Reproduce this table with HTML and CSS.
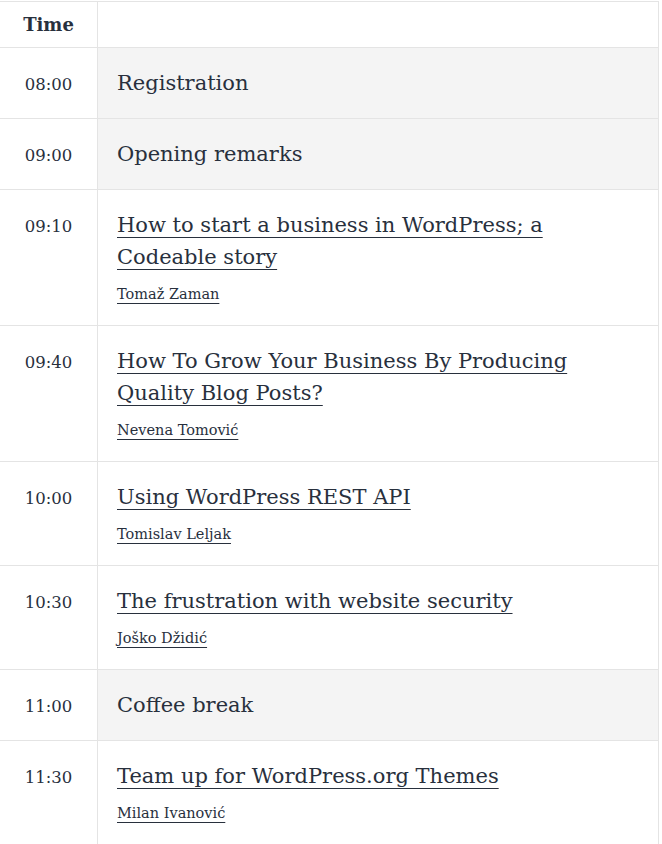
FILE: index.html
```html
<!DOCTYPE html>
<html lang="en">
<head>
    <meta charset="UTF-8">
    <meta name="viewport" content="width=device-width, initial-scale=1.0">
    <title>Schedule</title>
    <link rel="stylesheet" href="styles.css">
</head>
<body>
    <table class="schedule">
        <thead>
            <tr>
                <th class="time">Time</th>
                <th class="session"></th>
            </tr>
        </thead>
        <tbody>
            <tr class="break">
                <td class="time">08:00</td>
                <td class="session"><span class="title">Registration</span></td>
            </tr>
            <tr class="break">
                <td class="time">09:00</td>
                <td class="session"><span class="title">Opening remarks</span></td>
            </tr>
            <tr>
                <td class="time">09:10</td>
                <td class="session">
                    <a href="#" class="title">How to start a business in WordPress; a Codeable story</a>
                    <div class="speaker"><a href="#">Tomaž Zaman</a></div>
                </td>
            </tr>
            <tr>
                <td class="time">09:40</td>
                <td class="session">
                    <a href="#" class="title">How To Grow Your Business By Producing Quality Blog Posts?</a>
                    <div class="speaker"><a href="#">Nevena Tomović</a></div>
                </td>
            </tr>
            <tr>
                <td class="time">10:00</td>
                <td class="session">
                    <a href="#" class="title">Using WordPress REST API</a>
                    <div class="speaker"><a href="#">Tomislav Leljak</a></div>
                </td>
            </tr>
            <tr>
                <td class="time">10:30</td>
                <td class="session">
                    <a href="#" class="title">The frustration with website security</a>
                    <div class="speaker"><a href="#">Joško Džidić</a></div>
                </td>
            </tr>
            <tr class="break">
                <td class="time">11:00</td>
                <td class="session"><span class="title">Coffee break</span></td>
            </tr>
            <tr>
                <td class="time">11:30</td>
                <td class="session">
                    <a href="#" class="title">Team up for WordPress.org Themes</a>
                    <div class="speaker"><a href="#">Milan Ivanović</a></div>
                </td>
            </tr>
        </tbody>
    </table>
</body>
</html>
```

FILE: styles.css
```css
* {
    margin: 0;
    padding: 0;
    box-sizing: border-box;
}

body {
    font-family: 'DejaVu Serif', 'Liberation Serif', serif;
    background: #fff;
    color: #28303d;
}

a {
    color: #28303d;
    text-decoration: underline;
    text-decoration-thickness: 1px;
    text-underline-offset: 0.25em;
}

.schedule {
    width: 659px;
    margin-top: 1px;
    border-collapse: separate;
    border-spacing: 0;
    border-top: 1px solid #e4e4e4;
    border-right: 1px solid #e4e4e4;
}

.schedule th,
.schedule td {
    border-bottom: 1px solid #e4e4e4;
    text-align: left;
}

.schedule td {
    vertical-align: baseline;
}

.schedule .time {
    width: 98px;
    border-right: 1px solid #e4e4e4;
    text-align: center;
    font-size: 16.5px;
    line-height: 32px;
    padding: 19px 0 17px;
}

.schedule td.session {
    padding: 19px 20px 19px 19px;
}

.schedule th.time,
.schedule th.session {
    padding: 10px 0;
    font-size: 18px;
    font-weight: bold;
    line-height: 25px;
    vertical-align: middle;
}

.schedule tr.break td.session {
    background: #f4f4f4;
}

.title {
    font-size: 21px;
    line-height: 32px;
}

.speaker {
    margin-top: 9px;
    font-size: 14.5px;
    line-height: 24px;
}
```
